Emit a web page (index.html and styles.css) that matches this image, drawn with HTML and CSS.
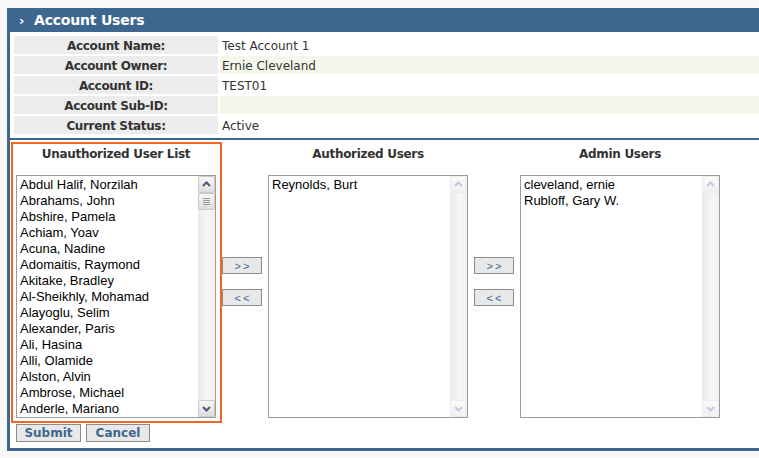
FILE: index.html
```html
<!DOCTYPE html>
<html>
<head>
<meta charset="utf-8">
<title>Account Users</title>
<link rel="stylesheet" href="styles.css">
</head>
<body>
<div class="panel">
  <div class="panel-header"><span class="chev">›</span>Account Users</div>
  <div class="info">
    <div class="lbl">Account Name:</div><div class="val">Test Account 1</div>
    <div class="lbl">Account Owner:</div><div class="val alt">Ernie Cleveland</div>
    <div class="lbl">Account ID:</div><div class="val">TEST01</div>
    <div class="lbl">Account Sub-ID:</div><div class="val alt"></div>
    <div class="lbl">Current Status:</div><div class="val">Active</div>
  </div>
  <div class="users">
    <div class="col col-unauth">
      <div class="col-title">Unauthorized User List</div>
      <div class="listbox">
        <div class="items">
          <div class="item">Abdul Halif, Norzilah</div>
          <div class="item">Abrahams, John</div>
          <div class="item">Abshire, Pamela</div>
          <div class="item">Achiam, Yoav</div>
          <div class="item">Acuna, Nadine</div>
          <div class="item">Adomaitis, Raymond</div>
          <div class="item">Akitake, Bradley</div>
          <div class="item">Al-Sheikhly, Mohamad</div>
          <div class="item">Alayoglu, Selim</div>
          <div class="item">Alexander, Paris</div>
          <div class="item">Ali, Hasina</div>
          <div class="item">Alli, Olamide</div>
          <div class="item">Alston, Alvin</div>
          <div class="item">Ambrose, Michael</div>
          <div class="item">Anderle, Mariano</div>
        </div>
        <div class="sb">
          <div class="sb-btn"><svg width="15" height="15" viewBox="0 0 15 15"><polyline points="4,9 7.5,5.5 11,9" fill="none" stroke="#4b5b7c" stroke-width="2"/></svg></div>
          <div class="sb-thumb"><svg width="15" height="15" viewBox="0 0 15 15"><path d="M4 4.5h7M4 6.5h7M4 8.5h7M4 10.5h7" stroke="#9a9a9a" stroke-width="1"/></svg></div>
          <div class="sb-track"></div>
          <div class="sb-btn"><svg width="15" height="15" viewBox="0 0 15 15"><polyline points="4,6 7.5,9.5 11,6" fill="none" stroke="#4b5b7c" stroke-width="2"/></svg></div>
        </div>
      </div>
    </div>
    <div class="movers">
      <button class="mv">&gt;&gt;</button>
      <button class="mv">&lt;&lt;</button>
    </div>
    <div class="col col-plain">
      <div class="col-title">Authorized Users</div>
      <div class="listbox">
        <div class="items">
          <div class="item">Reynolds, Burt</div>
        </div>
        <div class="sb">
          <div class="sb-btn off"><svg width="15" height="15" viewBox="0 0 15 15"><polyline points="4,9 7.5,5.5 11,9" fill="none" stroke="#bccbe6" stroke-width="2"/></svg></div>
          <div class="sb-track"></div>
          <div class="sb-btn off"><svg width="15" height="15" viewBox="0 0 15 15"><polyline points="4,6 7.5,9.5 11,6" fill="none" stroke="#bccbe6" stroke-width="2"/></svg></div>
        </div>
      </div>
    </div>
    <div class="movers movers-2">
      <button class="mv">&gt;&gt;</button>
      <button class="mv">&lt;&lt;</button>
    </div>
    <div class="col col-plain">
      <div class="col-title">Admin Users</div>
      <div class="listbox">
        <div class="items">
          <div class="item">cleveland, ernie</div>
          <div class="item">Rubloff, Gary W.</div>
        </div>
        <div class="sb">
          <div class="sb-btn off"><svg width="15" height="15" viewBox="0 0 15 15"><polyline points="4,9 7.5,5.5 11,9" fill="none" stroke="#bccbe6" stroke-width="2"/></svg></div>
          <div class="sb-track"></div>
          <div class="sb-btn off"><svg width="15" height="15" viewBox="0 0 15 15"><polyline points="4,6 7.5,9.5 11,6" fill="none" stroke="#bccbe6" stroke-width="2"/></svg></div>
        </div>
      </div>
    </div>
  </div>
  <div class="actions">
    <button class="act act-submit">Submit</button>
    <button class="act act-cancel">Cancel</button>
  </div>
</div>
</body>
</html>
```

FILE: styles.css
```css
html, body {
  margin: 0;
  padding: 0;
  overflow: hidden;
  background: #f8f8f8;
}
body {
  font-family: "DejaVu Sans", Verdana, sans-serif;
  color: #333;
}
.panel {
  margin: 8px 0 0 7px;
  border-left: 3px solid #3d678f;
  border-bottom: 3px solid #3d678f;
  background: #fff;
}
.panel-header {
  height: 24px;
  line-height: 25px;
  background: #3d678f;
  color: #fff;
  font-weight: bold;
  font-size: 14px;
  padding-left: 9px;
  letter-spacing: -0.2px;
}
.chev {
  display: inline-block;
  width: 8px;
  margin-right: 7px;
  font-size: 13px;
}
.info {
  display: grid;
  grid-template-columns: 204px 1fr;
  grid-auto-rows: 18px;
  gap: 2px;
  padding: 4px 0 4px 4px;
  border-bottom: 2px solid #3d678f;
}
.lbl {
  background: #ececec;
  font-weight: bold;
  font-size: 12px;
  line-height: 20px;
  text-align: center;
  color: #333;
  letter-spacing: -0.35px;
}
.val {
  font-size: 12px;
  line-height: 20px;
  padding-left: 2px;
  color: #333;
}
.val.alt {
  background: #f5f7ea;
}
.users {
  display: flex;
  padding: 2px 0 0 1px;
}
.col {
  box-sizing: border-box;
}
.col-unauth {
  width: 211px;
  height: 281px;
  border: 2px solid #f26726;
  padding-left: 3px;
}
.col-plain {
  width: 200px;
  padding-top: 2px;
}
.col-title {
  height: 31px;
  line-height: 20px;
  text-align: center;
  font-weight: bold;
  font-size: 12px;
  color: #333;
  letter-spacing: -0.3px;
}
.col-unauth .col-title {
  width: 200px;
}
.listbox {
  box-sizing: border-box;
  width: 200px;
  height: 243px;
  border: 1px solid #9c9c9c;
  background: #fff;
  display: flex;
  font-family: "Liberation Sans", Arial, sans-serif;
  font-size: 13px;
  color: #000;
}
.items {
  flex: 1;
  overflow: hidden;
  padding: 1px 0 0 3px;
}
.item {
  height: 16px;
  line-height: 16px;
  white-space: nowrap;
}
.sb {
  width: 17px;
  display: flex;
  flex-direction: column;
  background: linear-gradient(to right, #eaeaea, #f6f6f6 60%, #f1f1f1);
}
.sb-btn, .sb-thumb {
  box-sizing: border-box;
  width: 17px;
  height: 17px;
  border: 1px solid #c9c9c9;
  border-radius: 2px;
  background: linear-gradient(#f7f7f7, #dedede);
  display: flex;
  align-items: center;
  justify-content: center;
}
.sb-btn.off {
  border-color: #ececec;
  background: linear-gradient(#fafafa, #f0f0f0);
}
.sb-track {
  flex: 1;
}
.movers {
  box-sizing: border-box;
  width: 46px;
  padding-top: 115px;
  display: flex;
  flex-direction: column;
  align-items: flex-start;
  gap: 15px;
}
.movers-2 {
  width: 52px;
  padding-left: 6px;
}
.mv {
  box-sizing: border-box;
  width: 40px;
  height: 17px;
  padding: 0;
  margin: 0;
  border: 1px solid #8c8c8c;
  background: #e8e8e8;
  color: #3d678f;
  font-family: "Liberation Sans", Arial, sans-serif;
  font-size: 11px;
  letter-spacing: 2px;
  text-indent: 2px;
  line-height: 16px;
}
.actions {
  display: flex;
  gap: 5px;
  padding: 1px 0 6px 6px;
}
.act {
  box-sizing: border-box;
  height: 18px;
  padding: 0;
  margin: 0;
  border: 1px solid #8c8c8c;
  background: #e8e8e8;
  color: #3d678f;
  font-family: "DejaVu Sans", Verdana, sans-serif;
  font-weight: bold;
  font-size: 12px;
  line-height: 17px;
}
.act-submit {
  width: 65px;
}
.act-cancel {
  width: 64px;
}
```
